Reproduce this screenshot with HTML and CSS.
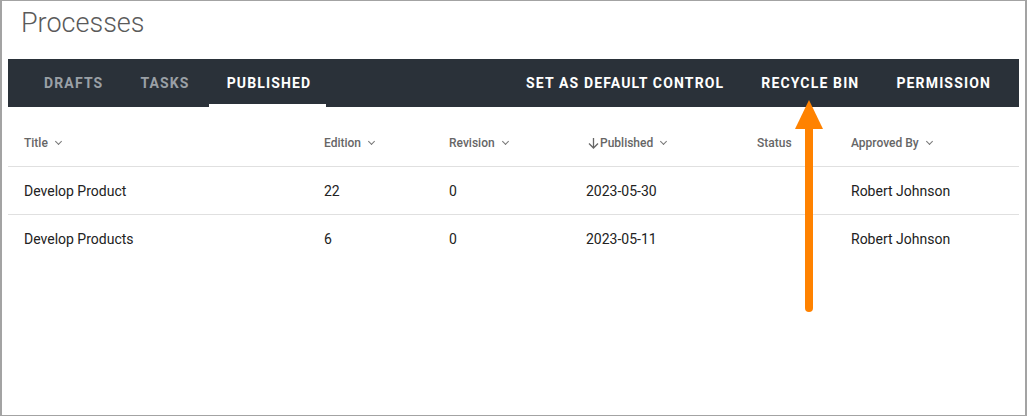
FILE: index.html
```html
<!DOCTYPE html>
<html>
<head>
<meta charset="utf-8">
<link rel="stylesheet" href="styles.css">
</head>
<body>
<div class="frame">
  <h1 class="page-title">Processes</h1>
  <div class="toolbar">
    <div class="tabs">
      <span class="tab">DRAFTS</span>
      <span class="tab">TASKS</span>
      <span class="tab active">PUBLISHED</span>
    </div>
    <div class="actions">
      <span class="action">SET AS DEFAULT CONTROL</span>
      <span class="action">RECYCLE BIN</span>
      <span class="action">PERMISSION</span>
    </div>
  </div>
  <div class="table">
    <div class="row head">
      <div class="c c1">Title <span class="chev"></span></div>
      <div class="c c2">Edition <span class="chev"></span></div>
      <div class="c c3">Revision <span class="chev"></span></div>
      <div class="c c4"><svg class="down" width="11" height="12" viewBox="0 0 11 12"><path d="M5.5 1v10M1 6.5l4.5 4.5 4.5-4.5" fill="none" stroke="#666" stroke-width="1.3"/></svg>Published <span class="chev"></span></div>
      <div class="c c5">Status</div>
      <div class="c c6">Approved By <span class="chev"></span></div>
    </div>
    <div class="row">
      <div class="c c1">Develop Product</div>
      <div class="c c2">22</div>
      <div class="c c3">0</div>
      <div class="c c4">2023-05-30</div>
      <div class="c c5"></div>
      <div class="c c6">Robert Johnson</div>
    </div>
    <div class="row last">
      <div class="c c1">Develop Products</div>
      <div class="c c2">6</div>
      <div class="c c3">0</div>
      <div class="c c4">2023-05-11</div>
      <div class="c c5"></div>
      <div class="c c6">Robert Johnson</div>
    </div>
  </div>
  <svg class="pointer" width="40" height="220" viewBox="0 0 40 220"><line x1="19" y1="26" x2="19" y2="208" stroke="#ff8200" stroke-width="8" stroke-linecap="round"/><polygon points="19,0 33,29 5,29" fill="#ff8200"/></svg>
</div>
</body>
</html>
```
FILE: styles.css
```css
* { box-sizing: border-box; }
html, body { margin: 0; padding: 0; background: #fff; }
body { font-family: Roboto, "Liberation Sans", sans-serif; }
.frame {
  position: relative;
  width: 1027px;
  height: 416px;
  border: 1px solid #a3a3a3;
  border-left-width: 2px;
  border-right-width: 2px;
  padding: 0 6px 0 6px;
  overflow: hidden;
}
.page-title {
  margin: 0;
  padding: 6px 0 0 13px;
  height: 58px;
  font-size: 27px;
  font-weight: 300;
  color: #5a5a5a;
  line-height: 32px;
}
.toolbar {
  width: 1011px;
  height: 48px;
  background: #2a3139;
  display: flex;
  justify-content: space-between;
  align-items: stretch;
}
.tabs { display: flex; padding-left: 17.5px; }
.tab, .action {
  font-size: 14px;
  font-weight: 700;
  letter-spacing: 1.15px;
  line-height: 48px;
}
.tab { color: #9aa0a6; padding: 0 18.5px; }
.tab.active { color: #fff; padding: 0 15px 0 17.5px; margin-left: 1px; box-shadow: inset 0 -3px 0 #fff; }
.actions { display: flex; gap: 37px; padding-right: 28px; }
.action { color: #fff; }
.table { width: 1011px; margin-top: 13px; }
.row { display: flex; align-items: center; height: 48px; border-bottom: 1px solid #e0e0e0; font-size: 14px; color: #222; }
.row.head { height: 47px; font-size: 12px; font-weight: 500; color: #666; }
.row.last { border-bottom: none; }
.c { display: flex; align-items: center; white-space: nowrap; }
.c1 { width: 316px; padding-left: 16px; }
.c2 { width: 125px; }
.c3 { width: 137px; }
.c4 { width: 171px; }
.c5 { width: 94px; }
.c6 { flex: 1; }
.down { margin-right: 1px; margin-left: 2px; }
.chev {
  display: inline-block;
  width: 5px; height: 5px;
  border-right: 1px solid #777;
  border-bottom: 1px solid #777;
  transform: rotate(45deg);
  margin-left: 8px;
  margin-top: -4px;
}
.pointer { position: absolute; left: 788px; top: 99px; }
```
